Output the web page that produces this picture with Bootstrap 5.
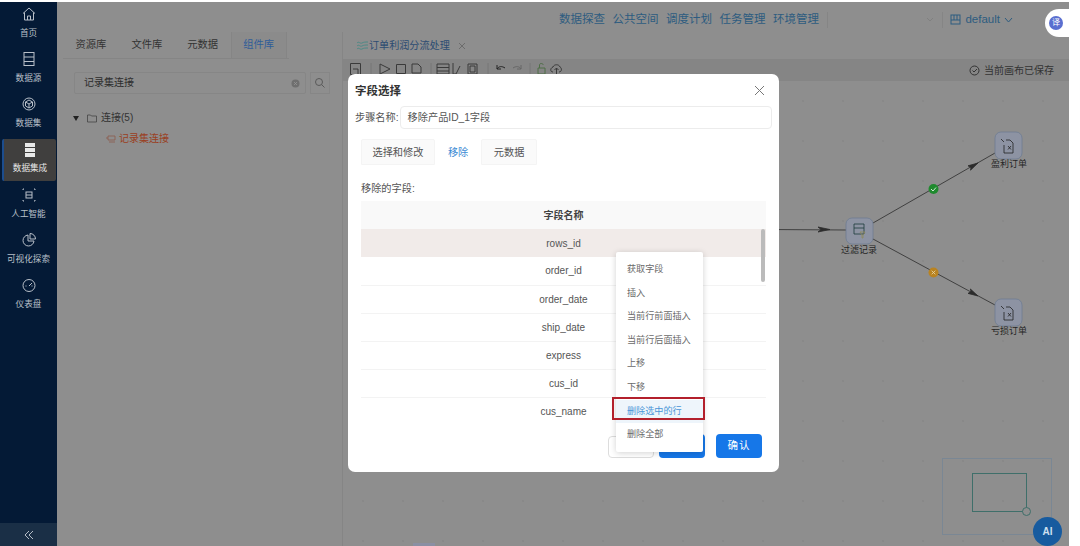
<!DOCTYPE html>
<html lang="zh-CN">
<head>
  <meta charset="UTF-8" />
  <meta name="viewport" content="width=device-width, initial-scale=1.0" />
  <title>字段选择</title>
  <link href="https://cdn.jsdelivr.net/npm/bootstrap@5.3.3/dist/css/bootstrap.min.css" rel="stylesheet" />
  <style>
    html, body { height: 100%; overflow: hidden; }
    body {
      background: #fff;
      font-family: "Liberation Sans", "Noto Sans CJK SC", sans-serif;
      font-size: 10px;
      color: #555;
    }
    .app-shell { width: 1069px; height: 544px; margin-top: 2px; background: #8e8e8e; position: relative; }
    /* sidebar */
    .side-bar { width: 57px; background: #041a36; color: #b9c0c9; flex: none; }
    .side-item { height: 45.2px; padding-top: 4px; font-size: 8.6px; line-height: 12px; white-space: nowrap; }
    .side-item svg { width: 16px; height: 16px; margin-bottom: 5px; display: block; }
    .side-item.is-on { background: #403f3e; color: #e8e8e8; border-left: 2px solid #1c4d8e; margin: 1px 1px 2px 2px; height: 42px; padding-top: 3px; border-radius: 2px; }
    .side-item.is-on svg { margin-bottom: 4px; }
    .side-fold { background: #1a2f46; color: #a9b2bd; height: 23px; }
    /* left panel */
    .lib-panel { width: 286px; flex: none; border-right: 1px solid #858585; margin-top: 30px; }
    .lib-tabs { border-bottom: 1px solid #858585; height: 27px; margin-left: 6px; width: 226px; }
    .lib-tabs span { padding: 0 12.500px; line-height: 26px; font-size: 10.300px; color: #333; white-space: nowrap; }
    .lib-tabs .is-on { color: #2f5d99; border-left: 1px solid #858585; border-right: 1px solid #858585; background: #8b8b8b; padding: 0 11.500px; }
    .lib-search { margin: 13px 12px 0 17px; height: 22px; gap: 4px; }
    .lib-input { flex: 1; border: 1px solid #868686; border-radius: 2px; padding: 0 5px 0 9px; line-height: 20px; font-size: 10px; color: #2c2c2c; }
    .lib-btn { width: 20px; border: 1px solid #868686; flex: none; }
    .tree-row { font-size: 10px; color: #333; line-height: 14px; margin-top: 17px; padding-left: 16px; gap: 8px; }
    .tree-hit { margin: 7px 0 0 48px; gap: 1px; color: #9a3f22; white-space: nowrap; font-size: 10px; line-height: 14px; }
    /* top */
    .work-area { flex: 1; min-width: 0; }
    .top-links { height: 30px; padding: 5px 0 0 216px; color: #2d5c80; font-size: 11.500px; gap: 7.500px; white-space: nowrap; }
    .top-rule { width: 1px; height: 16px; background: #858585; }
    .db-pick { color: #2d5c80; font-size: 11.500px; gap: 4px; }
    .tab-strip { height: 27px; padding-left: 13px; color: #2c4c72; font-size: 10.100px; line-height: 26px; }
    .tool-strip { height: 22px; background: #858585; padding: 1px 15px 0 6px; color: #333; font-size: 10px; }
    .flow-canvas { height: 465px; background-image: radial-gradient(#888 .7px, transparent .8px); background-size: 40px 40px; }
    /* canvas */
    .flow-svg { position: absolute; left: 770px; top: 118px; width: 299px; height: 240px; }
    .flow-lbl { position: absolute; font-size: 9px; color: #262626; white-space: nowrap; transform: translateX(-50%); }
    .stub-node { position: absolute; left: 413px; top: 541px; width: 22px; height: 3px; background: #8a8fa3; }
    .mini-map { position: absolute; left: 942px; top: 456px; width: 110px; height: 77px; border: 1px solid #7a8794; }
    .mini-view { position: absolute; left: 29px; top: 14px; width: 55px; height: 39px; border: 1.500px solid #3f6f6a; }
    .mini-dot { position: absolute; right: -5px; bottom: -5px; width: 9px; height: 9px; border: 1px solid #3f6f6a; border-radius: 50%; background: #8e8e8e; }
    .ai-btn { position: absolute; left: 1033px; top: 515px; width: 29px; height: 29px; background: #175b9f; color: #cfe0f0; font-size: 10px; font-weight: 700; border-radius: 50%; }
    .trans-btn { position: absolute; right: 0; top: 7px; width: 24px; height: 28px; padding-left: 4px; background: #fff; border-radius: 14px 0 0 14px; }
    .trans-dot { width: 14px; height: 14px; background: #5a6fd0; color: #fff; border-radius: 50%; font-size: 8px; line-height: 14px; text-align: center; }
    /* modal */
    .field-dlg { position: absolute; left: 348px; top: 72px; width: 431px; height: 398px; background: #fff; border: 0; border-radius: 7px; padding: 9px 7px; color: #555; }
    .dlg-title { font-size: 11.500px; font-weight: 700; color: #333; line-height: 16px; }
    .dlg-close { position: absolute; right: 14px; top: 11px; width: 11px; height: 11px; }
    .step-name { margin-top: 7px; gap: 1px; font-size: 10.200px; white-space: nowrap; }
    .step-input { flex: 1; height: 23px; border: 1px solid #ececec; border-radius: 4px; padding: 0 7px; font-size: 10.200px; line-height: 21px; color: #555; }
    .dlg-tabs { margin: 10px 0 0 6px; border-bottom: 0; gap: 0; }
    .dlg-tabs .nav-link { height: 26px; padding: 0 10.500px; line-height: 25px; font-size: 10.200px; color: #555; background: #fafafa; border: 1px solid #f4f4f4; border-radius: 2px 2px 0 0; margin: 0; }
    .dlg-tabs .nav-link.active { background: #fff; color: #3d8bd4; border-color: transparent; padding: 0 12px; }
    .dlg-tabs .nav-item:last-child .nav-link { padding: 0 11.500px; }
    .dlg-sub { margin: 17px 0 0 6px; font-size: 10.200px; line-height: 14px; }
    .field-wrap { margin: 5px 6px 0; width: 405px; height: 224px; overflow: hidden; position: relative; }
    .field-tbl { margin: 0; width: 405px; table-layout: fixed; }
    .field-tbl th, .field-tbl td { height: 28px; padding: 0; text-align: center; vertical-align: middle; font-size: 10px; color: #555; border-bottom: 1px solid #f3f3f3; box-shadow: none; }
    .field-tbl th { background: #f9f9f9; font-weight: 700; color: #444; border-bottom: 0; }
    .field-tbl tr.is-picked td { background: #f1ebe9; border-bottom: 0; }
    .tbl-thumb { position: absolute; right: 1px; top: 28px; width: 4px; height: 53px; background: #bbb; border-radius: 2px; }
    .dlg-foot { position: absolute; right: 17px; bottom: 14px; align-items: flex-end; }
    .dlg-foot .btn { height: 24px; width: 46px; padding: 0; font-size: 10.500px; border-radius: 4px; letter-spacing: 1px; }
    .dlg-foot .btn-ghost { border: 1px solid #ddd; background: #fff; height: 22px; margin-right: 5px; }
    .btn-blue { background: #1677e8; border: 0; color: #fff; }
    .dlg-foot .btn-mid { margin-right: 11px; }
    /* context menu */
    .ctx-menu { position: absolute; display: block; left: 616px; top: 250px; width: 87px; height: 200px; min-width: 0; padding: 6px 0 0; margin: 0; border: 0; border-radius: 2px; background: #fff; box-shadow: 0 1px 6px rgba(0,0,0,.18); }
    .ctx-menu .dropdown-item { height: 23.600px; line-height: 23.600px; padding: 0 0 0 11px; font-size: 9.100px; color: #6a6a6a; }
    .ctx-menu .dropdown-item.is-hot { background: #eef5fb; color: #4a95d8; }
    .red-box { position: absolute; left: 612px; top: 395px; width: 93px; height: 23px; border: 2.500px solid #b3202c; z-index: 1001; }
  </style>
</head>
<body>
  <div class="app-shell d-flex">
    <div class="side-bar d-flex flex-column">
      <div class="side-item d-flex flex-column align-items-center">
        <svg viewBox="0 0 16 16" fill="none" stroke="currentColor"><path d="M2 7.500 8 2l6 5.500M3.500 6.500V14h9V6.500M6.500 14v-4h3v4"/></svg>首页
      </div>
      <div class="side-item d-flex flex-column align-items-center">
        <svg viewBox="0 0 16 16" fill="none" stroke="currentColor"><rect x="3" y="1.500" width="10" height="13"/><path d="M3 6h10M3 10.500h10"/></svg>数据源
      </div>
      <div class="side-item d-flex flex-column align-items-center">
        <svg viewBox="0 0 16 16" fill="none" stroke="currentColor"><circle cx="8" cy="8" r="6"/><path d="M4.500 6 8 4l3.500 2v4L8 12l-3.500-2zM4.500 6 8 8l3.500-2M8 8v4"/></svg>数据集
      </div>
      <div class="side-item is-on d-flex flex-column align-items-center">
        <svg viewBox="0 0 16 16" fill="#e8e8e8" stroke="none"><rect x="3" y="1" width="10" height="4"/><rect x="3" y="6" width="10" height="4"/><rect x="3" y="11" width="10" height="4"/></svg>数据集成
      </div>
      <div class="side-item d-flex flex-column align-items-center">
        <svg viewBox="0 0 16 16" fill="none" stroke="currentColor"><rect x="5" y="5" width="6" height="6"/><path d="M5 8h6M2 3V2h1M13 2h1v1M2 13v1h1M13 14h1v-1"/></svg>人工智能
      </div>
      <div class="side-item d-flex flex-column align-items-center">
        <svg viewBox="0 0 16 16" fill="none" stroke="currentColor"><path d="M7 3a5.500 5.500 0 1 0 6 6H7zM9 1.500A5.500 5.500 0 0 1 14.500 7H9z"/></svg>可视化探索
      </div>
      <div class="side-item d-flex flex-column align-items-center">
        <svg viewBox="0 0 16 16" fill="none" stroke="currentColor"><circle cx="8" cy="8.500" r="6"/><path d="m8 9 3-3M4.500 9h1M10.500 9h1"/></svg>仪表盘
      </div>
      <div class="side-fold mt-auto d-flex align-items-center justify-content-center">
        <svg width="10" height="10" viewBox="0 0 10 10" fill="none" stroke="#b4bcc6"><path d="M5 1 1 5l4 4M9 1 5 5l4 4"/></svg>
      </div>
    </div>

    <div class="lib-panel">
      <div class="lib-tabs d-flex">
        <span>资源库</span><span>文件库</span><span>元数据</span><span class="is-on">组件库</span>
      </div>
      <div class="lib-search d-flex">
        <div class="lib-input d-flex align-items-center justify-content-between">记录集连接
          <svg width="9" height="9" viewBox="0 0 9 9"><circle cx="4.500" cy="4.500" r="4" fill="#6f6f6f"/><path d="m3 3 3 3m0-3-3 3" stroke="#999" stroke-width=".7"/></svg>
        </div>
        <div class="lib-btn d-flex align-items-center justify-content-center">
          <svg width="12" height="12" viewBox="0 0 12 12" fill="none" stroke="#5a5a5a"><circle cx="5" cy="5" r="3.500"/><path d="m7.500 7.500 3 3"/></svg>
        </div>
      </div>
      <div class="tree-row d-flex align-items-center">
        <svg width="6" height="5" viewBox="0 0 6 5"><path d="M0 0h6L3 5z" fill="#222"/></svg>
        <span class="d-flex align-items-center gap-1">
          <svg width="10" height="9" viewBox="0 0 10 9" fill="none" stroke="#444" stroke-width=".8"><path d="M.5 8V1h3l1 1h5v6z"/></svg>连接(5)
        </span>
      </div>
      <div class="tree-hit d-flex align-items-center">
        <svg width="13" height="10" viewBox="0 0 13 10" fill="none" stroke="#8d5a4c" stroke-width=".8"><path d="M3 2h7v4H3zM1 4h2M10 8H4"/></svg><span>记录集连接</span>
      </div>
    </div>

    <div class="work-area d-flex flex-column">
      <div class="top-links d-flex align-items-center">
        <span>数据探查</span><span>公共空间</span><span>调度计划</span><span>任务管理</span><span>环境管理</span>
        <div class="top-rule"></div>
        <svg class="ms-auto" width="8" height="6" viewBox="0 0 8 6" fill="none" stroke="#808080"><path d="m1 1 3 3 3-3"/></svg>
        <div class="top-rule"></div>
        <div class="db-pick d-flex align-items-center me-5 pe-2">
          <svg width="11" height="11" viewBox="0 0 11 11" fill="none" stroke="#2d5c80"><rect x="1" y="1" width="9" height="9"/><path d="M4 1v5M7 1v5M1 6h9"/></svg>default
          <svg width="9" height="6" viewBox="0 0 9 6" fill="none" stroke="#2d5c80"><path d="m1 1 3.500 4L8 1"/></svg>
        </div>
      </div>
      <div class="tab-strip d-flex align-items-center">
        <svg width="13" height="9" viewBox="0 0 13 9" fill="none" stroke="#4c8a86"><path d="M1 2c2-2 3 1 5 0s3-1 6-1M1 5c2-2 3 1 5 0s3-1 6-1M1 8c2-2 3 1 5 0s3-1 6-1"/></svg>
        订单利润分流处理
        <svg class="ms-2" width="8" height="8" viewBox="0 0 8 8" stroke="#6c6c6c"><path d="m1 1 6 6m0-6-6 6"/></svg>
      </div>
      <div class="tool-strip d-flex align-items-center justify-content-between">
        <svg width="216" height="16" viewBox="350 64 216 16" fill="none" stroke="#3a3a3a">
          <path d="M351.500 64.500h10v11h-10zM354 70h5v5"/>
          <path d="M372 64v14M432 64v14M489 64v14M531 64v14" stroke="#777"/>
          <path d="m381 65 10 5-10 5z"/>
          <path d="M397.500 65.500h9v9h-9zM413 65h6l3 3v6h-9zM438 65h12v10h-12zM438 68.500h12M438 72h12M454 64v11h3l4-8M469 65h9v10h-9zM471 67h5v6h-5z"/>
          <path d="M498 70c2-3 5-3 8-1M498 66v4h4" stroke="#222"/>
          <path d="M522 70c-2-3-5-3-8-1M522 66v4h-4" stroke="#666"/>
          <path d="M539 69h7v6h-7zM540.500 69v-3c0-2 3-2 4 0" stroke="#4f6f47"/>
          <path d="M554 73c-3 0-3-4 0-5 1-3 6-3 7 0 2 1 2 5-1 5M557.500 75v-6M555.500 71l2-2 2 2"/>
        </svg>
        <span class="d-flex align-items-center gap-1">
          <svg width="11" height="11" viewBox="0 0 11 11" fill="none" stroke="#333"><circle cx="5.500" cy="5.500" r="4.500"/><path d="m3.500 5.500 1.500 1.500 3-3"/></svg>当前画布已保存
        </span>
      </div>
      <div class="flow-canvas"></div>
    </div>

    <svg class="flow-svg" viewBox="0 0 299 240" fill="none" stroke="#2c2c2c" stroke-width=".8">
      <path d="M0 109.500 76 110M103 103 225 33M103 119 225 185"/>
      <path d="M48 107 60 109.500 48 112 51 109.500zM208 43l-10 2.800 3 1.700-.5 2.700zM208 176l-10-2.600 3-1.800-.6-2.600z" fill="#2c2c2c"/>
      <rect x="76" y="98" width="27" height="26" rx="6" fill="#8d93a3" stroke="#6f7c93"/>
      <rect x="225" y="12" width="27" height="27" rx="6" fill="#8d93a3" stroke="#6f7c93"/>
      <rect x="225" y="179" width="27" height="27" rx="6" fill="#8d93a3" stroke="#6f7c93"/>
      <path d="M84 104h10v10H84zM84 108h10" stroke="#1d3a3a"/>
      <path d="m90 112 5 0-2 3v3h-1v-3z" stroke="#8f8a5c"/>
      <path d="M236 20h4l3 3v10h-9v-8M231 19l3 3M238 26l3 3.500m0-3.500-3 3.500M236 187h4l3 3v10h-9v-8M231 186l3 3M238 193l3 3.500m0-3.500-3 3.500" stroke="#222"/>
      <circle cx="163.500" cy="69" r="5" fill="#1f8a2e" stroke="none"/>
      <path d="m161 69 2 2 3-3.500" stroke="#fff"/>
      <circle cx="163.500" cy="152.500" r="5" fill="#b98321" stroke="none"/>
      <path d="m161.700 150.700 3.600 3.600m0-3.600-3.600 3.600" stroke="#e8d9b0"/>
    </svg>
    <div class="flow-lbl" style="left:859px;top:242px">过滤记录</div>
    <div class="flow-lbl" style="left:1009px;top:156px">盈利订单</div>
    <div class="flow-lbl" style="left:1009px;top:323px">亏损订单</div>
    <div class="stub-node"></div>

    <div class="mini-map"><div class="mini-view"><div class="mini-dot"></div></div></div>
    <div class="ai-btn d-flex align-items-center justify-content-center">AI</div>
    <div class="trans-btn d-flex align-items-center"><div class="trans-dot">译</div></div>

    <div class="field-dlg">
      <div class="dlg-title">字段选择</div>
      <svg class="dlg-close" viewBox="0 0 11 11" stroke="#777"><path d="m1 1 9 9m0-9-9 9"/></svg>
      <div class="step-name d-flex align-items-center">步骤名称:
        <div class="step-input">移除产品ID_1字段</div>
      </div>
      <ul class="nav nav-tabs dlg-tabs">
        <li class="nav-item"><a class="nav-link" href="#">选择和修改</a></li>
        <li class="nav-item"><a class="nav-link active" href="#">移除</a></li>
        <li class="nav-item"><a class="nav-link" href="#">元数据</a></li>
      </ul>
      <div class="dlg-sub">移除的字段:</div>
      <div class="field-wrap">
        <table class="table field-tbl">
          <thead><tr><th>字段名称</th></tr></thead>
          <tbody>
            <tr class="is-picked"><td>rows_id</td></tr>
            <tr><td>order_id</td></tr>
            <tr><td>order_date</td></tr>
            <tr><td>ship_date</td></tr>
            <tr><td>express</td></tr>
            <tr><td>cus_id</td></tr>
            <tr><td>cus_name</td></tr>
          </tbody>
        </table>
        <div class="tbl-thumb"></div>
      </div>
      <div class="dlg-foot d-flex">
        <button class="btn btn-ghost" type="button"></button>
        <button class="btn btn-blue btn-mid" type="button"></button>
        <button class="btn btn-blue" type="button">确认</button>
      </div>
    </div>

    <div class="dropdown-menu ctx-menu">
      <a class="dropdown-item" href="#">获取字段</a>
      <a class="dropdown-item" href="#">插入</a>
      <a class="dropdown-item" href="#">当前行前面插入</a>
      <a class="dropdown-item" href="#">当前行后面插入</a>
      <a class="dropdown-item" href="#">上移</a>
      <a class="dropdown-item" href="#">下移</a>
      <a class="dropdown-item is-hot" href="#">删除选中的行</a>
      <a class="dropdown-item" href="#">删除全部</a>
    </div>
    <div class="red-box"></div>
  </div>
  <script src="https://cdn.jsdelivr.net/npm/bootstrap@5.3.3/dist/js/bootstrap.bundle.min.js"></script>
</body>
</html>
